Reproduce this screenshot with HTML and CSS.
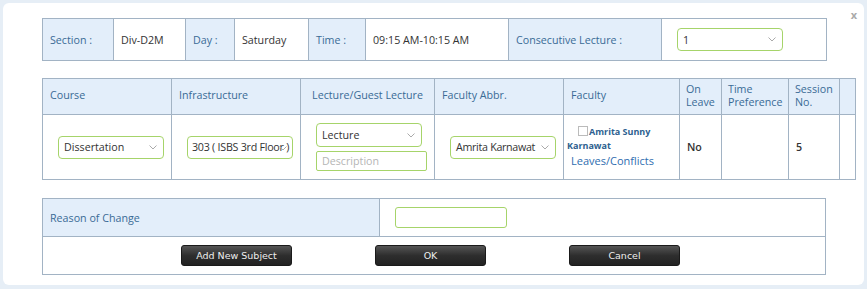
FILE: index.html
```html
<!DOCTYPE html>
<html lang="en">
<head>
    <meta charset="UTF-8">
    <title>Change Lecture</title>
    <link rel="stylesheet" href="styles.css">
</head>
<body>
    <div class="modal">
        <span class="close">x</span>

        <!-- Ders bilgisi -->
        <table class="grid info">
            <colgroup>
                <col style="width:71px"><col style="width:72px"><col style="width:49px"><col style="width:74px">
                <col style="width:57px"><col style="width:143px"><col style="width:153px"><col style="width:165px">
            </colgroup>
            <tr>
                <th>Section :</th>
                <td>Div-D2M</td>
                <th>Day :</th>
                <td>Saturday</td>
                <th>Time :</th>
                <td>09:15 AM-10:15 AM</td>
                <th>Consecutive Lecture :</th>
                <td><div class="select">1 <svg viewBox="0 0 8 5"><path d="M0.5 0.5 L4 4 L7.5 0.5"/></svg></div></td>
            </tr>
        </table>

        <!-- Dersler -->
        <table class="grid lectures">
            <colgroup>
                <col style="width:129px"><col style="width:129px"><col style="width:134px"><col style="width:129px">
                <col style="width:116px"><col style="width:42px"><col style="width:67px"><col style="width:51px"><col style="width:16px">
            </colgroup>
            <tr class="head">
                <th>Course</th>
                <th>Infrastructure</th>
                <th class="center">Lecture/Guest Lecture</th>
                <th>Faculty Abbr.</th>
                <th>Faculty</th>
                <th class="tight">On Leave</th>
                <th class="tight">Time Preference</th>
                <th class="tight">Session No.</th>
                <th></th>
            </tr>
            <tr class="body">
                <td><div class="select">Dissertation <svg viewBox="0 0 8 5"><path d="M0.5 0.5 L4 4 L7.5 0.5"/></svg></div></td>
                <td><div class="select clip">303 ( ISBS 3rd Floor ) <svg viewBox="0 0 8 5"><path d="M0.5 0.5 L4 4 L7.5 0.5"/></svg></div></td>
                <td>
                    <div class="select short">Lecture <svg viewBox="0 0 8 5"><path d="M0.5 0.5 L4 4 L7.5 0.5"/></svg></div>
                    <div class="text placeholder">Description</div>
                </td>
                <td><div class="select narrow">Amrita Karnawat <svg viewBox="0 0 8 5"><path d="M0.5 0.5 L4 4 L7.5 0.5"/></svg></div></td>
                <td class="faculty">
                    <div class="name"><span class="check"></span>Amrita Sunny<br>Karnawat</div>
                    <a href="#">Leaves/Conflicts</a>
                </td>
                <td class="plain">No</td>
                <td></td>
                <td class="plain">5</td>
                <td></td>
            </tr>
        </table>

        <!-- Değişiklik nedeni -->
        <table class="grid reason">
            <colgroup>
                <col style="width:337px"><col style="width:446px">
            </colgroup>
            <tr>
                <th>Reason of Change</th>
                <td><div class="text wide"></div></td>
            </tr>
            <tr>
                <td colspan="2" class="actions">
                    <div class="buttons">
                        <button>Add New Subject</button>
                        <button>OK</button>
                        <button>Cancel</button>
                    </div>
                </td>
            </tr>
        </table>
    </div>
</body>
</html>
```

FILE: styles.css
```css
/* Sayfa ve modal */
body {
    margin: 0;
    background: #e6eef6;
    font-family: "Open Sans", "DejaVu Sans", sans-serif;
    font-size: 10.7px;
    color: #333;
}

.modal {
    position: relative;
    margin: 3px;
    width: 822px;
    height: 267px;
    padding: 15px 0 0 39px;
    background: #fff;
    border-radius: 6px;
}

.close {
    position: absolute;
    top: 4px;
    right: 7px;
    color: #aaa;
    font-size: 11px;
    font-weight: bold;
}

/* Tablolar */
.grid {
    border-collapse: collapse;
    table-layout: fixed;
    border: 1px solid #8fadc9;
}

.grid th,
.grid td {
    border: 1px solid #a2b3c4;
    padding: 0 7px;
    text-align: left;
    font-weight: normal;
}

.grid th {
    background: #e3eefa;
    color: #3a6b96;
}

.info {
    width: 784px;
}

.info tr {
    height: 42px;
}

.info td:last-child {
    padding-left: 15px;
}

.lectures {
    width: 813px;
    margin-top: 17px;
}

.lectures .head {
    height: 36px;
}

.lectures .head th {
    line-height: 13px;
    padding-bottom: 3px;
}

.lectures .head th.center {
    text-align: center;
}

.lectures .head th.tight {
    padding: 0 6px 2px;
}

.lectures .body {
    height: 65px;
}

.lectures .body td {
    padding: 0 7px 0 15px;
}

.lectures .body td.plain {
    padding-left: 7px;
    font-weight: 600;
    color: #333;
}

.reason {
    width: 783px;
    margin-top: 18px;
}

.reason tr {
    height: 38px;
}

.reason td {
    padding-left: 15px;
}

.reason td.actions {
    height: 35px;
    padding: 0;
}

/* Form alanları */
.select,
.text {
    position: relative;
    box-sizing: border-box;
    display: flex;
    align-items: center;
    justify-content: space-between;
    width: 106px;
    height: 23px;
    padding: 0 6px 0 5px;
    border: 1px solid #a6d46a;
    border-radius: 4px;
    background: #fff;
    color: #333;
    white-space: nowrap;
    overflow: hidden;
}

.select svg {
    flex: none;
    width: 8px;
    height: 5px;
    fill: none;
    stroke: #aaa;
    stroke-width: 1;
}

.select.clip {
    padding: 0 0 0 4px;
    letter-spacing: -0.25px;
}

.select.clip svg {
    position: absolute;
    right: 5px;
    top: 9px;
}

.select.narrow {
    letter-spacing: -0.3px;
}

.select.short {
    height: 24px;
}

.text {
    width: 111px;
    height: 20px;
    margin-top: 4px;
    border-radius: 2px;
}

.placeholder {
    color: #b5b5b5;
}

.text.wide {
    width: 112px;
    height: 21px;
    margin: 0;
    border-radius: 3px;
}

/* Öğretim üyesi */
.lectures .body td.faculty {
    padding: 0 0 0 3px;
}

.faculty .name {
    font-size: 9px;
    font-weight: bold;
    color: #2d5f8f;
    line-height: 14px;
}

.check {
    display: inline-block;
    width: 8px;
    height: 8px;
    margin: 0 1px 0 11px;
    border: 1px solid #bbb;
    vertical-align: -1px;
}

.faculty a {
    display: block;
    margin-left: 4px;
    color: #2f6db0;
    text-decoration: none;
    font-size: 11px;
    line-height: 16px;
}

/* Butonlar */
.buttons {
    display: flex;
    justify-content: center;
    gap: 83px;
    padding-right: 7px;
}

.buttons button {
    width: 111px;
    height: 21px;
    border: 1px solid #1a1a1a;
    border-radius: 3px;
    background: linear-gradient(#555, #2e2e2e 50%, #222);
    color: #eee;
    font-family: "DejaVu Sans", sans-serif;
    font-size: 9.5px;
    cursor: pointer;
}
```
